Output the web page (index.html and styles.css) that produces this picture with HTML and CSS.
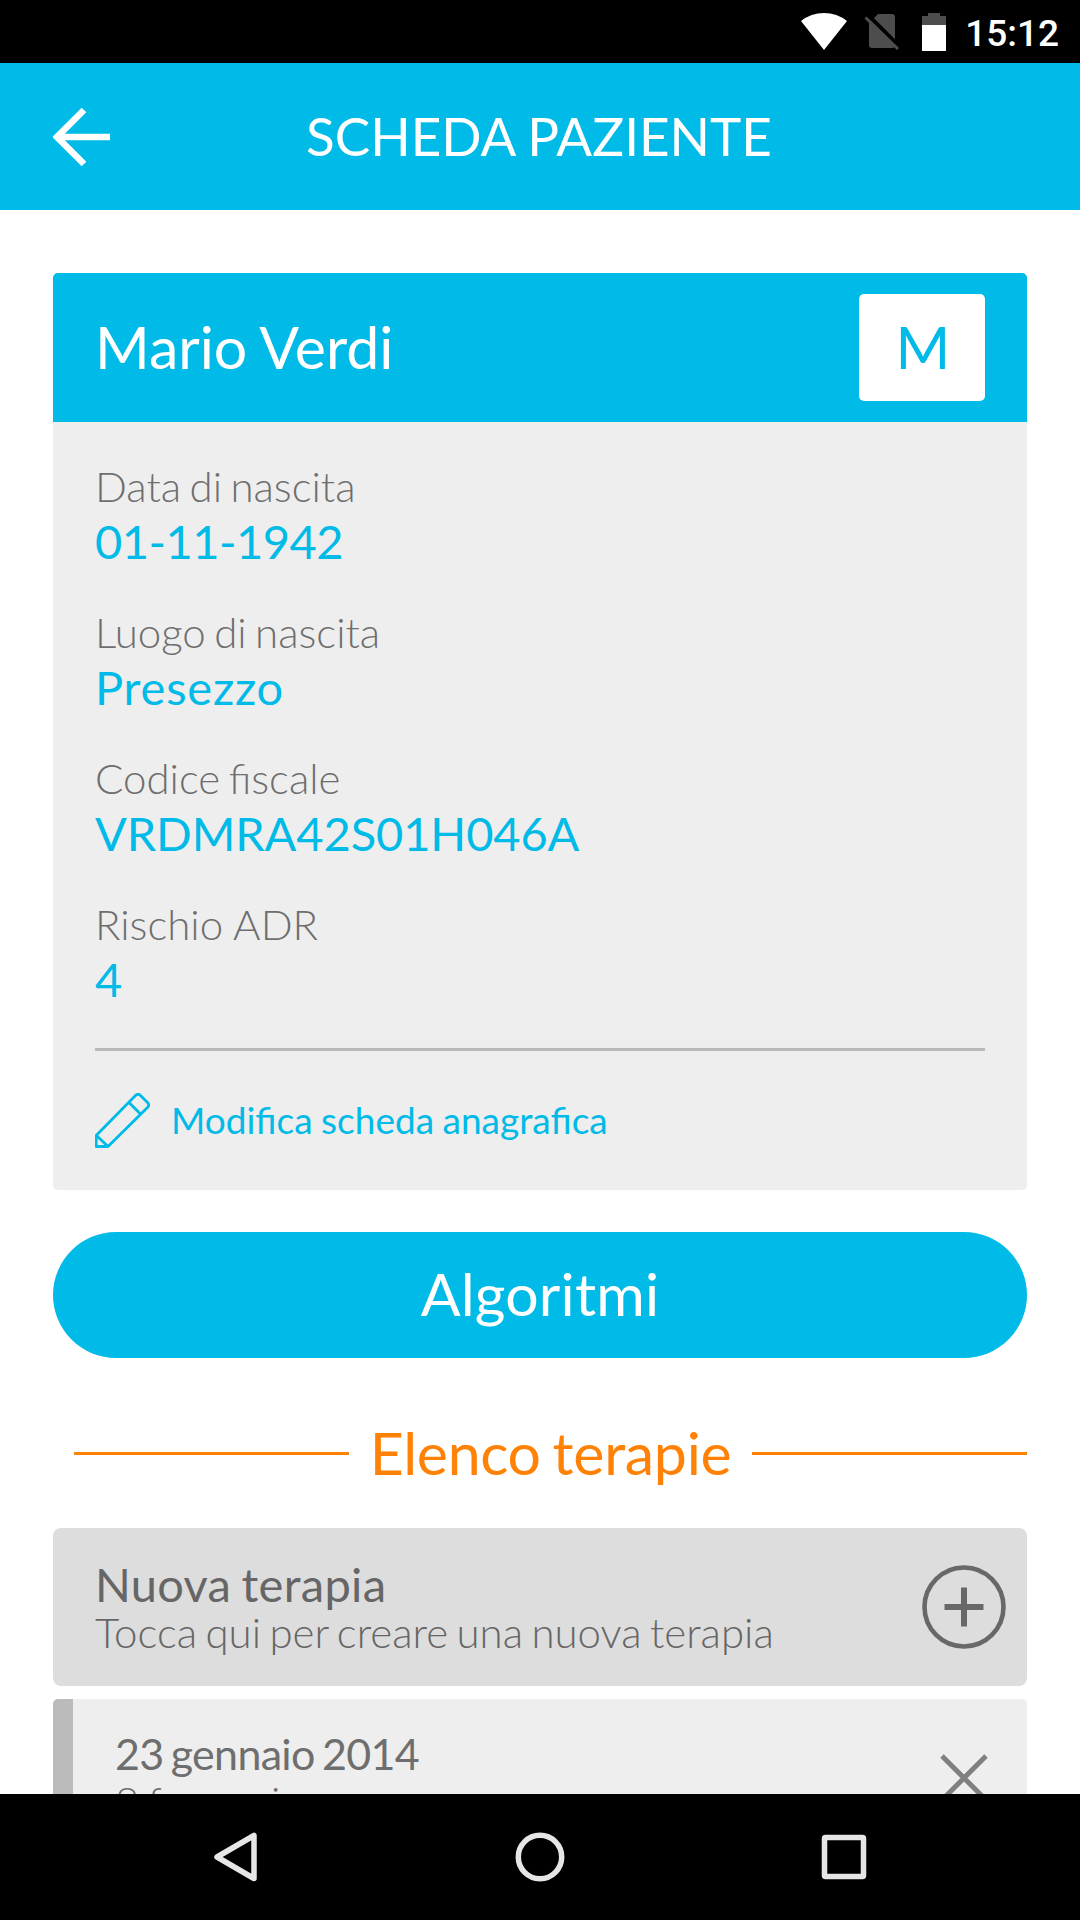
FILE: index.html
```html
<!DOCTYPE html>
<html lang="it">

<head>
  <meta charset="UTF-8">
  <meta name="viewport" content="width=device-width, initial-scale=1.0">
  <title>Scheda paziente</title>
  <link rel="stylesheet" href="styles.css">
</head>

<body>
  <div class="status-bar">
    <svg class="wifi" width="46" height="37" viewBox="0 0 46 37">
      <path d="M0 8Q10 0 23 0T46 8L23 37Z" fill="#fff"/>
    </svg>
    <svg class="sim" width="36" height="36" viewBox="0 0 36 36">
      <path d="M14 0H28Q31 0 31 3V31Q31 34 28 34H8Q5 34 5 31V9Z" fill="#4d4d4d"/>
      <path d="M4 1L36 33" stroke="#000" stroke-width="4"/>
      <path d="M1.500 3.500L34 35" stroke="#4d4d4d" stroke-width="3"/>
    </svg>
    <svg class="battery" width="24" height="38" viewBox="0 0 24 38">
      <path d="M6 0H18V3H24V12H0V3H6Z" fill="#4d4d4d"/>
      <rect y="12" width="24" height="26" fill="#fff"/>
    </svg>
    <span class="clock">15:12</span>
  </div>

  <div class="header">
    <svg class="back" width="57" height="60" viewBox="0 0 57 60">
      <path d="M57 30H6M31 3L4 30L31 57" fill="none" stroke="#fff" stroke-width="6.600"/>
    </svg>
    <h1 class="title">SCHEDA PAZIENTE</h1>
  </div>

  <div class="content">
    <div class="patient-card">
      <div class="patient-header">
        <span class="patient-name">Mario Verdi</span>
        <span class="gender">M</span>
      </div>
      <div class="patient-body">
        <div class="field">
          <div class="label">Data di nascita</div>
          <div class="value date">01-11-1942</div>
        </div>
        <div class="field">
          <div class="label">Luogo di nascita</div>
          <div class="value place">Presezzo</div>
        </div>
        <div class="field">
          <div class="label">Codice fiscale</div>
          <div class="value">VRDMRA42S01H046A</div>
        </div>
        <div class="field">
          <div class="label risk">Rischio ADR</div>
          <div class="value">4</div>
        </div>
        <div class="edit-row">
          <svg width="55" height="55" viewBox="0 0 55 55" fill="none" stroke="#00bae7" stroke-width="2.800" stroke-linejoin="round">
            <path d="M1.200 42.500L40.500 2.500Q43 0 45.500 2.500L52.500 9.500Q55 12 52.500 14.500L13 53.500H1.200Z"/>
            <path d="M34 9.500L45.500 21M1.500 42.500L13 53.500"/>
          </svg>
          <span>Modifica scheda anagrafica</span>
        </div>
      </div>
    </div>

    <div class="btn-algoritmi">Algoritmi</div>

    <div class="section-title"><span>Elenco terapie</span></div>

    <div class="new-therapy">
      <div>
        <div class="new-title">Nuova terapia</div>
        <div class="new-text">Tocca qui per creare una nuova terapia</div>
      </div>
      <svg width="84" height="84" viewBox="0 0 84 84" fill="none" stroke="#686868">
        <circle cx="42" cy="42" r="39.500" stroke-width="4.600"/>
        <path d="M42 22.500V61.500M22.500 42H61.500" stroke-width="6"/>
      </svg>
    </div>

    <div class="therapy">
      <div>
        <div class="therapy-date">23 gennaio 2014</div>
        <div class="therapy-text">8 farmaci</div>
      </div>
      <svg width="48" height="48" viewBox="0 0 48 48" fill="none" stroke="#808080" stroke-width="5">
        <path d="M2 2L46 46M46 2L2 46"/>
      </svg>
    </div>
  </div>

  <div class="nav-bar">
    <svg width="50" height="50" viewBox="0 0 50 50">
      <path d="M43 3.500V46.500L6 25Z"/>
    </svg>
    <svg width="50" height="50" viewBox="0 0 50 50">
      <circle cx="25" cy="25" r="21.700"/>
    </svg>
    <svg width="50" height="50" viewBox="0 0 50 50">
      <rect x="5.500" y="5.500" width="39" height="39" rx="1"/>
    </svg>
  </div>
</body>

</html>
```

FILE: styles.css
```css
* {
  box-sizing: border-box;
}

body {
  margin: 0;
  height: 1920px;
  display: flex;
  flex-direction: column;
  overflow: hidden;
  background: #fff;
  font-family: Lato, "Open Sans", sans-serif;
}

svg {
  display: block;
  flex-shrink: 0;
}

.status-bar {
  height: 63px;
  flex-shrink: 0;
  display: flex;
  justify-content: flex-end;
  align-items: center;
  padding-right: 21px;
  background: #000;
}

.sim {
  margin-left: 17px;
}

.battery {
  margin-left: 22px;
}

.clock {
  margin-left: 19px;
  padding-top: 4px;
  font-family: Roboto, sans-serif;
  font-size: 37px;
  font-weight: 500;
  color: #fff;
}

.header {
  height: 147px;
  flex-shrink: 0;
  display: flex;
  align-items: center;
  padding: 0 53px;
  background: #00bae7;
}

.title {
  flex: 1;
  margin: 0 59px 2px 0;
  font-size: 53px;
  line-height: 64px;
  font-weight: normal;
  text-align: center;
  word-spacing: -1px;
  color: #fff;
}

.content {
  flex: 1;
  min-height: 0;
  overflow: hidden;
  padding: 63px 53px 0;
}

.patient-card {
  border-radius: 5px;
  overflow: hidden;
  background: #eee;
}

.patient-header {
  height: 149px;
  display: flex;
  justify-content: space-between;
  align-items: center;
  padding: 0 42px;
  background: #00bae7;
  color: #fff;
  font-size: 59px;
}

.patient-name {
  padding-bottom: 2px;
  line-height: 73px;
  word-spacing: -1px;
}

.gender {
  width: 126px;
  height: 107px;
  padding-left: 2px;
  line-height: 105px;
  border-radius: 5px;
  background: #fff;
  color: #00bae7;
  text-align: center;
}

.patient-body {
  height: 768px;
  padding: 39px 42px 0;
}

.field {
  margin-bottom: 36px;
}

.label {
  font-size: 42px;
  line-height: 50px;
  font-weight: 300;
  word-spacing: -3px;
  color: #6e6e6e;
}

.label.risk {
  word-spacing: 0;
}

.value {
  font-size: 47px;
  line-height: 60px;
  letter-spacing: -0.1px;
  color: #00bae7;
}

.value.date {
  letter-spacing: -0.5px;
}

.value.place {
  letter-spacing: 0.8px;
}

.edit-row {
  height: 142px;
  margin-top: 39px;
  display: flex;
  align-items: center;
  gap: 21px;
  border-top: 3px solid #bababa;
  font-size: 37px;
  word-spacing: -1px;
  color: #00bae7;
}

.edit-row span {
  padding-bottom: 2px;
}

.btn-algoritmi {
  height: 126px;
  margin-top: 42px;
  border-radius: 63px;
  background: #00bae7;
  color: #fff;
  font-size: 59px;
  line-height: 123px;
  letter-spacing: 0.2px;
  text-align: center;
}

.section-title {
  height: 170px;
  display: flex;
  align-items: center;
  gap: 21px;
  padding-left: 21px;
  font-size: 59px;
  line-height: 76px;
  letter-spacing: -0.3px;
  word-spacing: -3px;
  color: #ff8207;
}

.section-title span {
  padding-top: 20px;
}

.section-title::before,
.section-title::after {
  content: "";
  flex: 1;
  height: 3px;
  margin-top: 21px;
  background: #ff8207;
}

.new-therapy {
  height: 158px;
  display: flex;
  justify-content: space-between;
  align-items: center;
  padding: 0 21px 0 42px;
  border-radius: 8px;
  background: #ddd;
  color: #666;
}

.new-title {
  font-size: 47px;
  line-height: 50px;
  letter-spacing: 0.3px;
  word-spacing: -2px;
}

.new-text {
  font-size: 42px;
  line-height: 46px;
  font-weight: 300;
  word-spacing: -3px;
}

.therapy {
  height: 158px;
  margin-top: 13px;
  display: flex;
  justify-content: space-between;
  align-items: center;
  padding: 0 39px 0 42px;
  border-left: 20px solid #bbb;
  border-radius: 5px;
  background: #eee;
  color: #6e6e6e;
}

.therapy-date {
  font-size: 43px;
  line-height: 46px;
  letter-spacing: -0.7px;
  word-spacing: -3px;
}

.therapy-text {
  font-size: 42px;
  line-height: 48px;
  font-weight: 300;
  word-spacing: -3px;
}

.nav-bar {
  height: 126px;
  flex-shrink: 0;
  display: flex;
  justify-content: center;
  align-items: center;
  gap: 254px;
  background: #000;
}

.nav-bar svg {
  fill: none;
  stroke: #e6e6e6;
  stroke-width: 5.5;
  stroke-linejoin: round;
}
```
